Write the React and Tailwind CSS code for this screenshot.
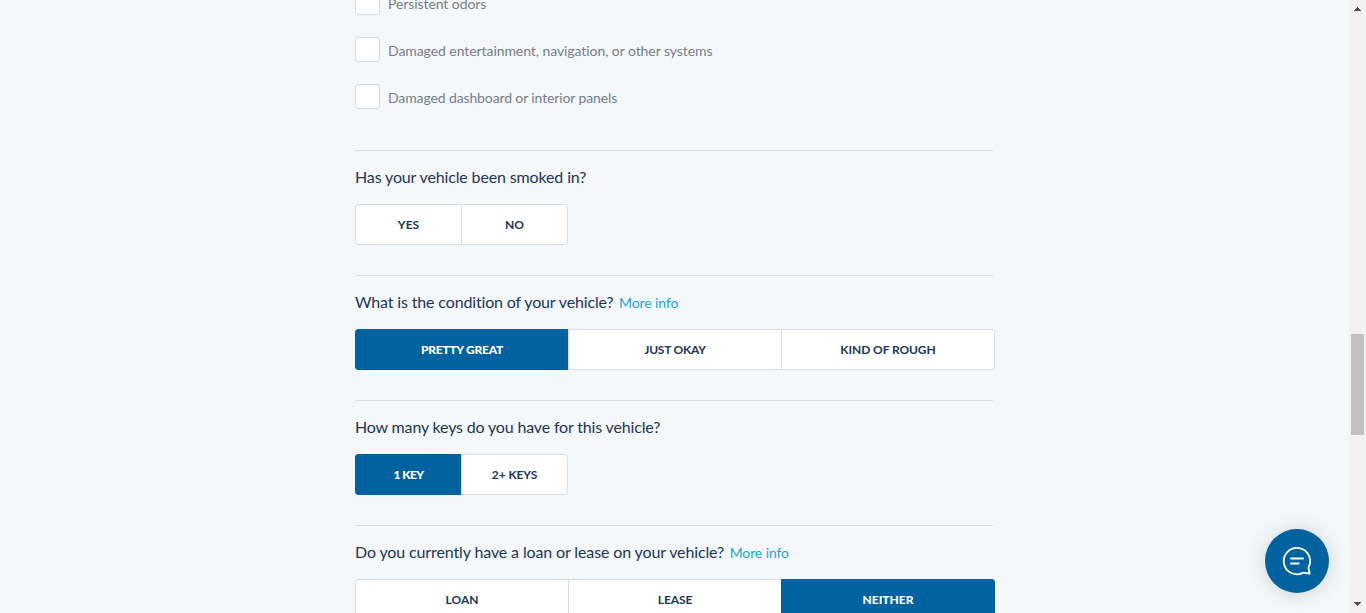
const damages = [
  { label: "Persistent odors", tracking: "tracking-[-0.08px]" },
  { label: "Damaged entertainment, navigation, or other systems", tracking: "tracking-[-0.07px]" },
  { label: "Damaged dashboard or interior panels", tracking: "tracking-[-0.12px]" },
];

const questions = [
  {
    text: "Has your vehicle been smoked in?",
    tracking: "tracking-[-0.14px]",
    width: "w-[107px]",
    options: [{ label: "YES" }, { label: "NO" }],
  },
  {
    text: "What is the condition of your vehicle?",
    tracking: "tracking-[-0.15px]",
    more: true,
    width: "w-[214px]",
    options: [
      { label: "PRETTY GREAT", selected: true, tracking: "tracking-[-0.25px]" },
      { label: "JUST OKAY", tracking: "tracking-[-0.22px]" },
      { label: "KIND OF ROUGH", tracking: "tracking-[-0.08px]" },
    ],
  },
  {
    text: "How many keys do you have for this vehicle?",
    tracking: "tracking-[-0.165px]",
    width: "w-[107px]",
    options: [
      { label: "1 KEY", selected: true, tracking: "tracking-[-0.6px]" },
      { label: "2+ KEYS", tracking: "tracking-[-0.1px]" },
    ],
  },
  {
    text: "Do you currently have a loan or lease on your vehicle?",
    tracking: "tracking-[-0.125px]",
    more: true,
    width: "w-[214px]",
    options: [{ label: "LOAN" }, { label: "LEASE", tracking: "tracking-[-0.1px]" }, { label: "NEITHER", selected: true }],
  },
];

function Damage({ label, tracking }) {
  return (
    <label className="flex h-[25px] items-center gap-2">
      <span className="size-[25px] shrink-0 rounded-[3px] border border-[#d8dcea] bg-white" />
      <span className={`pt-[3px] text-[14px] leading-[20px] whitespace-nowrap text-[#777d88] ${tracking}`}>{label}</span>
    </label>
  );
}

function Question({ text, tracking, more, width, options }) {
  return (
    <section className="h-[125px] shrink-0">
      <div className="w-[638px] border-t border-[#d8dcea]" />
      <div className="flex h-[53px] items-baseline gap-[5.6px] pt-[14px] leading-6 whitespace-nowrap">
        <h2 className={`text-[16px] text-[#1d3557] ${tracking}`}>{text}</h2>
        {more && <a className="text-[14px] tracking-[-0.1px] text-[#1ba5d8]">More info</a>}
      </div>
      <div className="flex">
        {options.map((o) => (
          <button
            key={o.label}
            className={`h-[41px] border text-[12px] whitespace-nowrap not-first:-ml-px first:rounded-l-[3px] last:rounded-r-[3px] ${width} ${o.tracking ?? ""} ${
              o.selected
                ? "border-[#00629f] bg-[#00629f] font-black text-white"
                : "border-[#d8dcea] bg-white font-bold text-[#1d3557]"
            }`}
          >
            {o.label}
          </button>
        ))}
      </div>
    </section>
  );
}

export default function App() {
  return (
    <div className="relative flex h-[613px] w-full overflow-hidden bg-[#f4f8fb] font-['Lato',sans-serif]">
      <main className="flex h-full flex-1 flex-col overflow-hidden pl-[355px]">
        <div className="-mt-[10px] flex h-[160px] shrink-0 flex-col gap-[22px]">
          {damages.map((d) => (
            <Damage key={d.label} {...d} />
          ))}
        </div>
        {questions.map((q) => (
          <Question key={q.text} {...q} />
        ))}
      </main>
      <div className="flex h-full w-[17px] flex-col items-center bg-[#f1f1f1]">
        <svg className="mt-[7px] h-[4px] w-[7px]" viewBox="0 0 7 4" shapeRendering="crispEdges">
          <path d="M3 0h1v1h1v1h1v1h1v1H0V3h1V2h1V1h1z" fill="#505050" />
        </svg>
        <div className="mt-[323px] h-[101px] w-[13px] bg-[#c1c1c1]" />
        <svg className="mt-auto mb-[7px] h-[4px] w-[7px]" viewBox="0 0 7 4" shapeRendering="crispEdges">
          <path d="M0 0h7v1H6v1H5v1H4v1H3V3H2V2H1V1H0z" fill="#505050" />
        </svg>
      </div>
      <button className="absolute right-[37px] bottom-[20px] flex size-16 items-center justify-center rounded-full bg-[#00629f] shadow-[0_1px_20px_rgba(0,0,0,0.16)]">
        <svg className="size-8" viewBox="0 0 32 32" fill="none" stroke="white" strokeWidth="1.8" strokeLinecap="round" strokeLinejoin="round">
          <path d="M28.7 28.7 27.4 22.6A13.2 13.2 0 1 0 22.4 27.6Z" />
          <path d="M10 13.5h12M10 18.5h7.7" />
        </svg>
      </button>
    </div>
  );
}
